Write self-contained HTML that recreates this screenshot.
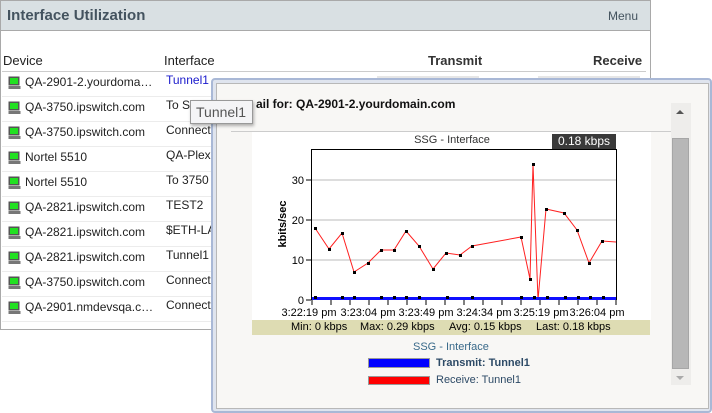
<!DOCTYPE html>
<html><head><meta charset="utf-8"><style>
*{margin:0;padding:0;box-sizing:border-box}
body{width:712px;height:413px;background:#fff;font-family:"Liberation Sans",Arial,sans-serif;position:relative;overflow:hidden}
.abs{position:absolute}
.panel{left:0;top:0;width:651px;height:330px;border:1px solid #a9a9a9;border-top:none;background:#fff}
.hdr{left:0;top:0;width:651px;height:31px;background:#d9e0e3;border:1px solid #a9a9a9}
.t{font-size:12px;color:#222;white-space:nowrap}
.row{left:4px;width:642px;height:25px;border-bottom:1px solid #ebebeb}
.ico{width:13px;height:13px}
</style></head><body>
<div class="abs panel"></div>
<div class="abs hdr"></div>
<div class="abs" style="left:7px;top:7px;font-size:15px;font-weight:bold;color:#44535f">Interface Utilization</div>
<div class="abs" style="left:608px;top:9px;font-size:12px;color:#44535f">Menu</div>
<div class="abs t" style="left:3px;top:53px;font-size:13px;color:#222">Device</div>
<div class="abs t" style="left:164px;top:53px;font-size:13px">Interface</div>
<div class="abs t" style="left:428px;top:53px;font-size:13px;font-weight:bold;color:#333">Transmit</div>
<div class="abs t" style="left:593px;top:53px;font-size:13px;font-weight:bold;color:#333">Receive</div>
<div class="abs" style="left:2px;top:71px;width:644px;border-top:1px solid #ccc"></div>
<div class="abs" style="left:377px;top:76px;width:102px;height:3px;background:#e6e6e6"></div>
<div class="abs" style="left:538px;top:76px;width:102px;height:3px;background:#e6e6e6"></div>

<svg class="abs" style="left:0;top:72px" width="212" height="252">
<defs><g id="m"><rect x="0.5" y="0.5" width="11" height="9" fill="#555"/><rect x="2" y="2" width="8" height="6" fill="#22e022"/><rect x="0.5" y="10" width="12" height="3" fill="#777"/></g></defs>
<g><use href="#m" x="8" y="4"/><use href="#m" x="8" y="29"/><use href="#m" x="8" y="54"/><use href="#m" x="8" y="79"/><use href="#m" x="8" y="104"/><use href="#m" x="8" y="129"/><use href="#m" x="8" y="154"/><use href="#m" x="8" y="179"/><use href="#m" x="8" y="204"/><use href="#m" x="8" y="229"/></g>
<g stroke="#ececec"><line x1="2" x2="212" y1="24.5" y2="24.5"/><line x1="2" x2="212" y1="49.5" y2="49.5"/><line x1="2" x2="212" y1="74.5" y2="74.5"/><line x1="2" x2="212" y1="99.5" y2="99.5"/><line x1="2" x2="212" y1="124.5" y2="124.5"/><line x1="2" x2="212" y1="149.5" y2="149.5"/><line x1="2" x2="212" y1="174.5" y2="174.5"/><line x1="2" x2="212" y1="199.5" y2="199.5"/><line x1="2" x2="212" y1="224.5" y2="224.5"/><line x1="2" x2="212" y1="249.5" y2="249.5"/></g>
</svg>
<div class="abs t" style="left:25px;top:75px">QA-2901-2.yourdoma…</div><div class="abs t" style="left:166px;top:73px;color:#1a1acc">Tunnel1</div>
<div class="abs t" style="left:25px;top:100px">QA-3750.ipswitch.com</div><div class="abs t" style="left:166px;top:98px">To S</div>
<div class="abs t" style="left:25px;top:125px">QA-3750.ipswitch.com</div><div class="abs t" style="left:166px;top:123px">Connect</div>
<div class="abs t" style="left:25px;top:150px">Nortel 5510</div><div class="abs t" style="left:166px;top:148px">QA-Plex</div>
<div class="abs t" style="left:25px;top:175px">Nortel 5510</div><div class="abs t" style="left:166px;top:173px">To 3750</div>
<div class="abs t" style="left:25px;top:200px">QA-2821.ipswitch.com</div><div class="abs t" style="left:166px;top:198px">TEST2</div>
<div class="abs t" style="left:25px;top:225px">QA-2821.ipswitch.com</div><div class="abs t" style="left:166px;top:223px">$ETH-LA</div>
<div class="abs t" style="left:25px;top:250px">QA-2821.ipswitch.com</div><div class="abs t" style="left:166px;top:248px">Tunnel1</div>
<div class="abs t" style="left:25px;top:275px">QA-3750.ipswitch.com</div><div class="abs t" style="left:166px;top:273px">Connect</div>
<div class="abs t" style="left:25px;top:300px">QA-2901.nmdevsqa.c…</div><div class="abs t" style="left:166px;top:298px">Connect</div>

<!-- popup -->
<div class="abs" style="left:211px;top:78px;width:501px;height:335px;border:2px solid #a9b8d6;border-radius:4px;background:#dfe4ee"></div>
<div class="abs" style="left:216px;top:83px;width:493px;height:326px;background:#f8f7f5;border:1px solid #b8b8b8"></div>
<div class="abs" style="left:216px;top:97px;font-size:12px;font-weight:bold;color:#111;white-space:nowrap">&nbsp;&nbsp;&nbsp;&nbsp;&nbsp;&nbsp;&nbsp;&nbsp;&nbsp;&nbsp;&nbsp;&nbsp;ail for: QA-2901-2.yourdomain.com</div>
<div class="abs" style="left:231px;top:131px;width:440px;border-top:1px solid #ccc"></div>
<div class="abs" style="left:671px;top:103px;width:20px;height:282px;background:#eeedeb"></div>
<div class="abs" style="left:672px;top:138px;width:17px;height:231px;background:#b7b7b7;border:1px solid #a6a6a6"></div>
<div class="abs" style="left:676px;top:110px;width:0;height:0;border:4px solid transparent;border-bottom:4px solid #555;border-top:none"></div>
<div class="abs" style="left:676px;top:376px;width:0;height:0;border:4px solid transparent;border-top:4px solid #aaa;border-bottom:none"></div>
<div class="abs" style="left:252px;top:132px;width:399px;height:188px;background:#fff"></div>
<div class="abs" style="left:552px;top:134px;width:64px;height:15px;background:#3a3a3a;color:#fff;font-size:12px;text-align:center;line-height:15px">0.18 kbps</div>
<svg class="abs" style="left:252px;top:132px" width="400" height="190" font-family="Liberation Sans,Arial,sans-serif">
<text x="200" y="11" font-size="11" fill="#333" text-anchor="middle">SSG - Interface</text>
<g stroke="#bbb"><line x1="59" x2="364" y1="48" y2="48"/><line x1="59" x2="364" y1="88" y2="88"/><line x1="59" x2="364" y1="128" y2="128"/></g>
<rect x="59.5" y="17.5" width="305" height="150" fill="none" stroke="#000"/>
<g font-size="11" fill="#000" text-anchor="end"><text x="52" y="52">30</text><text x="52" y="92">20</text><text x="52" y="132">10</text><text x="52" y="172">0</text></g>
<g stroke="#000"><line x1="54" x2="59" y1="48" y2="48"/><line x1="54" x2="59" y1="88" y2="88"/><line x1="54" x2="59" y1="128" y2="128"/><line x1="54" x2="59" y1="168" y2="168"/></g>
<text transform="translate(34,92) rotate(-90)" font-size="11" font-weight="bold" text-anchor="middle">kbits/sec</text>
<polyline fill="none" stroke="#ff2020" stroke-width="1" points="63,96 77,117 90,101 102,140 116,131 129,118 142,118 154,99 167,114 181,137 194,121 208,123 220,114 269,105 278,147 281,32 286,168 294,77 312,81 325,98 337,131 350,109 364,110"/>
<g fill="#000"><rect x="62" y="95" width="3" height="3"/><rect x="76" y="116" width="3" height="3"/><rect x="89" y="100" width="3" height="3"/><rect x="101" y="139" width="3" height="3"/><rect x="115" y="130" width="3" height="3"/><rect x="128" y="117" width="3" height="3"/><rect x="141" y="117" width="3" height="3"/><rect x="153" y="98" width="3" height="3"/><rect x="166" y="113" width="3" height="3"/><rect x="180" y="136" width="3" height="3"/><rect x="193" y="120" width="3" height="3"/><rect x="207" y="122" width="3" height="3"/><rect x="219" y="113" width="3" height="3"/><rect x="268" y="104" width="3" height="3"/><rect x="277" y="146" width="3" height="3"/><rect x="280" y="31" width="3" height="3"/><rect x="293" y="76" width="3" height="3"/><rect x="311" y="80" width="3" height="3"/><rect x="324" y="97" width="3" height="3"/><rect x="336" y="130" width="3" height="3"/><rect x="349" y="108" width="3" height="3"/></g>
<rect x="60" y="165" width="304" height="3" fill="#1010ff"/>
<g fill="#000"><rect x="62" y="164" width="3" height="3"/><rect x="89" y="164" width="3" height="3"/><rect x="101" y="164" width="3" height="3"/><rect x="128" y="164" width="3" height="3"/><rect x="141" y="164" width="3" height="3"/><rect x="153" y="164" width="3" height="3"/><rect x="166" y="164" width="3" height="3"/><rect x="194" y="164" width="3" height="3"/><rect x="219" y="164" width="3" height="3"/><rect x="268" y="164" width="3" height="3"/><rect x="281" y="164" width="3" height="3"/><rect x="294" y="164" width="3" height="3"/><rect x="312" y="164" width="3" height="3"/><rect x="325" y="164" width="3" height="3"/><rect x="337" y="164" width="3" height="3"/><rect x="350" y="164" width="3" height="3"/></g>
<g stroke="#000"><line x1="60" x2="60" y1="168" y2="173"/><line x1="79" x2="79" y1="168" y2="173"/><line x1="98" x2="98" y1="168" y2="173"/><line x1="117" x2="117" y1="168" y2="173"/><line x1="136" x2="136" y1="168" y2="173"/><line x1="155" x2="155" y1="168" y2="173"/><line x1="174" x2="174" y1="168" y2="173"/><line x1="193" x2="193" y1="168" y2="173"/><line x1="212" x2="212" y1="168" y2="173"/><line x1="231" x2="231" y1="168" y2="173"/><line x1="250" x2="250" y1="168" y2="173"/><line x1="269" x2="269" y1="168" y2="173"/><line x1="288" x2="288" y1="168" y2="173"/><line x1="307" x2="307" y1="168" y2="173"/><line x1="326" x2="326" y1="168" y2="173"/><line x1="345" x2="345" y1="168" y2="173"/><line x1="364" x2="364" y1="168" y2="173"/></g>
<g font-size="11" fill="#000" text-anchor="middle"><text x="57" y="184">3:22:19 pm</text><text x="116" y="184">3:23:04 pm</text><text x="174" y="184">3:23:49 pm</text><text x="232" y="184">3:24:34 pm</text><text x="289" y="184">3:25:19 pm</text><text x="345" y="184">3:26:04 pm</text></g>
</svg>
<div class="abs" style="left:252px;top:320px;width:398px;height:15px;background:#dedcb3;font-size:11px;color:#000;white-space:nowrap;line-height:15px"><span style="position:absolute;left:39px">Min: 0 kbps</span><span style="position:absolute;left:108px">Max: 0.29 kbps</span><span style="position:absolute;left:197px">Avg: 0.15 kbps</span><span style="position:absolute;left:284px">Last: 0.18 kbps</span></div>
<div class="abs" style="left:413px;top:341px;font-size:11px;color:#3a6a8a">SSG - Interface</div>
<div class="abs" style="left:368px;top:358px;width:62px;height:10px;background:#0000ff;border:1px solid #999"></div>
<div class="abs" style="left:368px;top:376px;width:62px;height:9px;background:#ff0000;border:1px solid #999"></div>
<div class="abs" style="left:436px;top:357px;font-size:11px;font-weight:bold;color:#2d4a66">Transmit: Tunnel1</div>
<div class="abs" style="left:436px;top:374px;font-size:11px;color:#2d4a66">Receive: Tunnel1</div>
<div class="abs" style="left:190px;top:100px;width:63px;height:24px;background:#f4f4f6;border:1px solid #999;box-shadow:1px 2px 3px rgba(0,0,0,.3);font-size:14px;color:#555;line-height:22px;padding-left:5px">Tunnel1</div>
</body></html>
